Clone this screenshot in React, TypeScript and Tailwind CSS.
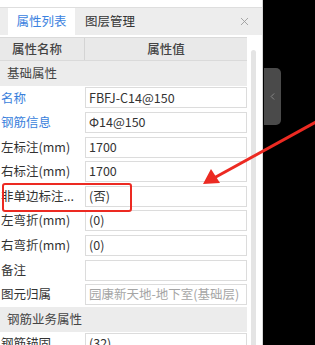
import { X, ChevronLeft } from "lucide-react";

type Row = {
  label: string;
  value?: string;
  blue?: boolean;
  dim?: boolean;
  group?: boolean;
};

const rows: Row[] = [
  { label: "基础属性", group: true },
  { label: "名称", value: "FBFJ-C14@150", blue: true },
  { label: "钢筋信息", value: "Φ14@150", blue: true },
  { label: "左标注(mm)", value: "1700" },
  { label: "右标注(mm)", value: "1700" },
  { label: "非单边标注...", value: "(否)" },
  { label: "左弯折(mm)", value: "(0)" },
  { label: "右弯折(mm)", value: "(0)" },
  { label: "备注", value: "" },
  { label: "图元归属", value: "园康新天地-地下室(基础层)", dim: true },
  { label: "钢筋业务属性", group: true },
  { label: "钢筋锚固", value: "(32)" },
];

export default function App() {
  return (
    <div
      className="relative w-[315px] h-[345px] bg-black overflow-hidden flex text-[12.5px] text-[#333]"
      style={{ fontFamily: '"Noto Sans CJK SC", "Noto Sans", sans-serif' }}
    >
      {/* Property panel */}
      <div className="w-[263px] shrink-0 bg-white border-r border-[#d6d6d6] flex flex-col">
        <div className="h-[8px] border-b border-[#dedede] shrink-0" />

        {/* Tabs */}
        <div className="h-[27px] shrink-0 bg-[#ededed] flex items-stretch pl-[8px]">
          <div className="w-[67px] bg-white text-[#3b82e0] flex items-center justify-center">
            属性列表
          </div>
          <div className="px-[10px] flex items-center">图层管理</div>
          <div className="ml-auto mr-[11px] flex items-center text-[#9a9a9a]">
            <X className="w-[13px] h-[13px]" strokeWidth={1.6} />
          </div>
        </div>

        <div className="flex flex-1 min-h-0 pt-[2px]">
          <div className="w-[247px] shrink-0 flex flex-col">
            {/* Header */}
            <div className="h-[24px] shrink-0 flex bg-[#e9e9e9] border-y border-[#dadada] text-[#444] font-medium">
              <div className="w-[85px] pl-[12px] flex items-center border-r border-[#d4d4d4]">
                属性名称
              </div>
              <div className="flex-1 flex items-center justify-center">属性值</div>
            </div>

            {rows.map((r, i) =>
              r.group ? (
                <div
                  key={i}
                  className="h-[24.6px] shrink-0 bg-[#ececec] pl-[7px] flex items-center text-[#444]"
                >
                  {r.label}
                </div>
              ) : (
                <div key={i} className="h-[24.6px] shrink-0 flex items-center">
                  <div
                    className={`w-[85px] pl-[1px] whitespace-nowrap ${
                      r.blue ? "text-[#3a7fdc]" : "text-[#333]"
                    }`}
                  >
                    {r.label}
                  </div>
                  <div
                    className={`flex-1 h-[21px] border border-[#dcdcdc] bg-white flex items-center pl-[3px] whitespace-nowrap overflow-hidden ${
                      r.dim ? "text-[#a5a5a5]" : "text-[#333]"
                    }`}
                  >
                    {r.value}
                  </div>
                </div>
              ),
            )}
          </div>

          {/* Scrollbar */}
          <div className="flex-1 flex pt-[13px] pl-[4px]">
            <div className="w-[5px] h-full bg-[#e4e4e4] rounded-t-[3px]" />
          </div>
        </div>
      </div>

      {/* Side collapse handle */}
      <div className="pt-[68px] pl-[1px]">
        <div className="w-[17px] h-[57px] bg-[#4a4a4a] rounded-r-[5px] flex items-center justify-center text-[#8a8a8a]">
          <ChevronLeft className="w-[11px] h-[11px]" strokeWidth={2} />
        </div>
      </div>

      {/* Annotation: red box */}
      <div className="absolute left-[2px] top-[183px] w-[130px] h-[29px] border-2 border-[#ec2a22] rounded-[3px] pointer-events-none" />

      {/* Annotation: red arrow */}
      <svg
        className="absolute left-0 top-0 pointer-events-none"
        width="315"
        height="345"
        viewBox="0 0 315 345"
      >
        <line x1="316" y1="122" x2="214" y2="178" stroke="#ec2a22" strokeWidth="3" />
        <polygon points="203,184 211,169 220,183" fill="#ec2a22" />
      </svg>
    </div>
  );
}
